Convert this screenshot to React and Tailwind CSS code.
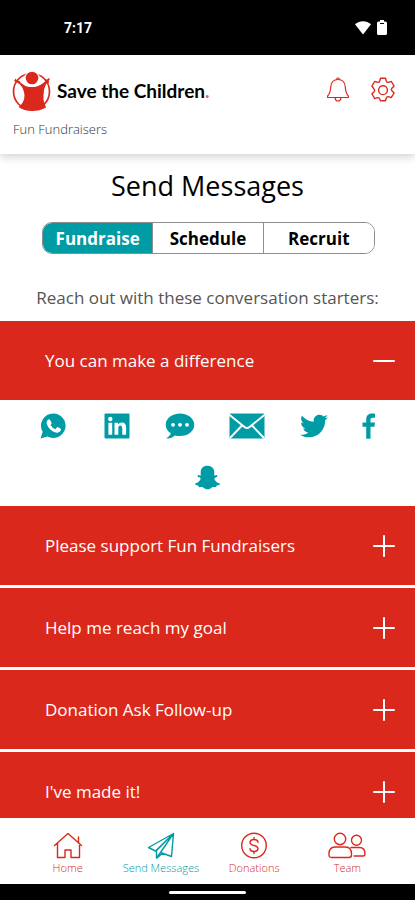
import { useState } from "react";
import { FaSnapchatGhost, FaTwitter } from "react-icons/fa";

function StatusBar() {
  return (
    <div className="flex h-[55px] shrink-0 items-center justify-between bg-black pr-7 pl-16 text-white">
      <span className="font-['Roboto',sans-serif] text-sm font-bold">7:17</span>
      <div className="flex items-center gap-1.5">
        <svg width="16" height="14" viewBox="0 0 16 14" fill="currentColor" aria-hidden="true">
          <path d="M0 3.200C4.600-.8 11.400-.8 16 3.200L8 13.500Z" />
        </svg>
        <svg width="10" height="15" viewBox="0 0 10 15" aria-hidden="true">
          <path
            fill="currentColor"
            d="M3 0h4v1.500h1.500q1.500 0 1.500 1.500v10.500q0 1.500-1.500 1.500h-7Q0 15 0 13.500V3q0-1.500 1.500-1.500H3Z"
          />
          <path d="M3 3.500h4" stroke="#000" strokeWidth="1" />
        </svg>
      </div>
    </div>
  );
}

function Logo() {
  return (
    <svg width="40" height="40" viewBox="0 0 40 40" aria-hidden="true">
      <circle cx="19.500" cy="20.500" r="18" fill="none" stroke="#da291c" strokeWidth="1.700" />
      <path
        fill="#da291c"
        d="M3.500 7.500 5 9.500l2.500.5 1.500 2q4 3.500 8 4h5.500q6-1 11-6l-.2-1.800 1.900.3 1.500-1.500 1.200 1.200-1.200 1.600.4 1.900-2.900 1.100q-2.700 5-2.700 11.200v5l2.500 7.500q-6 3.500-14 3.500T6.500 36q6-4.500 6-11.500-.2-6.500-5-11.500L2 10Z"
      />
      <circle cx="20" cy="7.500" r="7.800" fill="#fff" />
      <circle cx="20" cy="7" r="6.300" fill="#da291c" />
    </svg>
  );
}

function BellIcon() {
  return (
    <svg width="24" height="26" viewBox="0 0 24 26" fill="none" stroke="currentColor" strokeWidth="1.200" strokeLinejoin="round" aria-hidden="true">
      <path d="M12 2.500C8 2.500 5.200 5.200 4.800 9.500c-.4 5.500-1 7.500-3.200 9.500v1.500h20.800V19c-2.200-2-2.800-4-3.200-9.500C18.800 5.200 16 2.500 12 2.500Z" />
      <path d="M10.500 2.500q.1-1.500 1.500-1.500t1.500 1.500M9 20.600q.5 3.400 3 3.400t3-3.400" />
    </svg>
  );
}

function GearIcon() {
  return (
    <svg width="26" height="26" viewBox="0 0 26 26" fill="none" stroke="currentColor" strokeWidth="1.400" strokeLinejoin="round" aria-hidden="true">
      <path d="M10.500 1.200h5l.8 2.800q.5 1.600 2 1.300l2.900-.9 2.900 4.600-2.200 2.200q-1.200 1.300 0 2.600l2.200 2.200-2.900 4.600-2.900-.9q-1.500-.3-2 1.300l-.8 2.800h-5L9.700 22q-.5-1.600-2-1.300l-2.900.9L1.900 17l2.200-2.200q1.200-1.300 0-2.600L1.900 9l2.900-4.600 2.900.9q1.500.3 2-1.300Z" />
      <circle cx="13" cy="13.200" r="4.400" />
    </svg>
  );
}

function Header() {
  return (
    <header className="relative flex h-[99px] shrink-0 items-start justify-between bg-white px-3 pt-4 shadow-[0_3px_8px_rgba(0,0,0,0.18)]">
      <div>
        <div className="flex items-center gap-[5px]">
          <Logo />
          <span className="font-['Lato',sans-serif] text-[19px] font-bold text-black">
            Save the Children<span className="text-[#da6a62]">.</span>
          </span>
        </div>
        <p className="mt-2 pl-px text-[13px] leading-5 font-light text-[#333333]">Fun Fundraisers</p>
      </div>
      <div className="flex items-center gap-5 pt-[6px] pr-[7px] text-[#da291c]">
        <button type="button" aria-label="Notifications"><BellIcon /></button>
        <button type="button" aria-label="Settings"><GearIcon /></button>
      </div>
    </header>
  );
}

const tabs = ["Fundraise", "Schedule", "Recruit"];

function Tabs() {
  const [active, setActive] = useState("Fundraise");
  return (
    <div className="mr-10 ml-[42px] mt-[18px] grid h-8 grid-cols-3 divide-x divide-[#8f8f8f] overflow-hidden rounded-[10px] border border-[#8f8f8f]">
      {tabs.map((tab) => (
        <button
          key={tab}
          type="button"
          aria-pressed={tab === active}
          onClick={() => setActive(tab)}
          className={`pt-0.5 text-[17px] leading-6 font-bold ${tab === active ? "bg-[#009ca6] text-white" : "bg-white text-black"}`}
        >
          {tab}
        </button>
      ))}
    </div>
  );
}

function WhatsAppIcon() {
  return (
    <svg width="30" height="26" viewBox="0 0 30 26" aria-hidden="true">
      <path
        fill="currentColor"
        d="M13.300.5a12.200 12.200 0 0 0-10.600 18.300L.5 25.500l7-2.100A12.200 12.200 0 1 0 13.300.5Z"
      />
      <path
        fill="#fff"
        d="M8 6.700q1-.9 2 0l1.600 3.200q.2.800-1.100 2.100 1.800 3 4.800 4.200l1.600-1.800q.5-.5 1.200-.1l2.700 1.400q.5.400.1 1.600-1.200 2.500-3.900 2.400-4.500-.4-8.300-5-2.700-3.600-1.900-6.100.4-1.200 1.200-1.900Z"
      />
    </svg>
  );
}

function LinkedInIcon() {
  return (
    <svg width="26" height="26" viewBox="0 0 26 26" aria-hidden="true">
      <rect x=".5" y=".5" width="25" height="25" rx="1" fill="currentColor" />
      <g fill="#fff">
        <circle cx="6.300" cy="6" r="2.200" />
        <path d="M4.400 9.800h3.800v12H4.400ZM10.500 9.800h3.600v1.700q1.200-2 3.800-2 4.200 0 4.200 5v7.300h-3.800v-6.500q0-2.700-1.900-2.700-2.100 0-2.100 2.700v6.500h-3.800Z" />
      </g>
    </svg>
  );
}

function ChatIcon() {
  return (
    <svg width="30" height="26" viewBox="0 0 30 26" aria-hidden="true">
      <path
        fill="currentColor"
        d="M15 .5C7 .5.7 5.500.7 11.800c0 3.600 2 6.600 5.100 8.500-.5 2-2 3.700-4.800 5 3.500.4 6.500-.6 8.800-2.900 1.600.5 3.400.7 5.200.7 8 0 14.300-5 14.300-11.300S23 .5 15 .5Z"
      />
      <g fill="#fff">
        <circle cx="8" cy="11.800" r="1.900" />
        <circle cx="15" cy="11.800" r="1.900" />
        <circle cx="22" cy="11.800" r="1.900" />
      </g>
    </svg>
  );
}

function MailIcon() {
  return (
    <svg width="36" height="26" viewBox="0 0 36 26" aria-hidden="true">
      <rect width="35" height="25" x=".5" y=".5" rx="1" fill="currentColor" />
      <path d="M0 1.500 15.500 14q2.500 2 5 0L36 1.500M1 25l12-12.500M35 25 23 12.500" fill="none" stroke="#fff" strokeWidth="1.900" />
    </svg>
  );
}

function FacebookIcon() {
  return (
    <svg width="14" height="26" viewBox="0 0 14 26" fill="currentColor" aria-hidden="true">
      <path d="M13 .7v4.100h-2.500C8.900 4.800 8.500 5.600 8.500 7v2.500H13l-.6 4.200H8.500v12h-4.300v-12H.5V9.500h3.700V6.300C4.200 2.600 6.400.4 9.700.4c1.500 0 2.800.2 3.300.3Z" />
    </svg>
  );
}

const linkClass = "text-[#009ca6]";

function ShareIcons() {
  return (
    <div className="pt-3 pb-[13px]">
      <div className="flex h-7 items-center justify-between pr-[39px] pl-10">
        <a href="#whatsapp" aria-label="WhatsApp" className={linkClass}><WhatsAppIcon /></a>
        <a href="#linkedin" aria-label="LinkedIn" className={linkClass}><LinkedInIcon /></a>
        <a href="#sms" aria-label="Text message" className={linkClass}><ChatIcon /></a>
        <a href="#email" aria-label="Email" className={linkClass}><MailIcon /></a>
        <a href="#twitter" aria-label="Twitter" className={linkClass}><FaTwitter size={28} /></a>
        <a href="#facebook" aria-label="Facebook" className={linkClass}><FacebookIcon /></a>
      </div>
      <div className="mt-6 flex h-[26px] items-center justify-center">
        <a href="#snapchat" aria-label="Snapchat" className={linkClass}><FaSnapchatGhost size={25} /></a>
      </div>
    </div>
  );
}

const starters = [
  "You can make a difference",
  "Please support Fun Fundraisers",
  "Help me reach my goal",
  "Donation Ask Follow-up",
  "I've made it!",
];

function Accordion() {
  const [open, setOpen] = useState(0);
  return (
    <div className="mt-[11px] flex flex-col gap-[3px]">
      {starters.map((title, i) => (
        <section key={title}>
          <button
            type="button"
            aria-expanded={i === open}
            onClick={() => setOpen(i === open ? -1 : i)}
            className="flex h-[79px] w-full items-center justify-between bg-[#da291c] pt-px pr-5 pl-[45px] text-left text-[17px] text-white"
          >
            {title}
            <svg width="22" height="22" viewBox="0 0 22 22" stroke="currentColor" strokeWidth="2" strokeLinecap="round" aria-hidden="true">
              <path d={i === open ? "M1 11h20" : "M1 11h20M11 1v20"} />
            </svg>
          </button>
          {i === open && <ShareIcons />}
        </section>
      ))}
    </div>
  );
}

function HomeIcon() {
  return <path d="M1.500 13.500 15 1.500l13.500 12M25.500 10.500V5M4.500 11.500V25.500H12V18h6v7.500h8.500v-14" />;
}

function PlaneIcon() {
  return (
    <path d="M27.500 1.500 2.500 15.500l7 3.500ZM27.500 1.500 14.500 20.500l11 4ZM27.500 1.500 10.500 18.500v7.500l4-5.500M11 26l5.500-4.700" />
  );
}

function DollarIcon() {
  return (
    <>
      <circle cx="15" cy="13.500" r="12.300" />
      <path d="M19 10.200q-.5-2.700-4-2.700t-4 2.700q0 2.300 4 3.300t4 3.300q-.5 2.700-4 2.700t-4-2.700M15 5.500v2M15 19.500v2" />
    </>
  );
}

function TeamIcon() {
  return (
    <>
      <circle cx="12" cy="7" r="5.700" />
      <path d="M1 22q0-7 6-7h10.500q6 0 6 7v1q0 2.500-2.500 2.500H3.500Q1 25.500 1 23Z" />
      <circle cx="28.500" cy="8.300" r="5" />
      <path d="M23 15.500h8.500q5.500 0 5.500 6.500 0 2-2 2h-9" />
    </>
  );
}

const navItems = [
  { label: "Home", Icon: HomeIcon, width: 30 },
  { label: "Send Messages", Icon: PlaneIcon, width: 30 },
  { label: "Donations", Icon: DollarIcon, width: 30 },
  { label: "Team", Icon: TeamIcon, width: 38 },
];

function BottomNav() {
  return (
    <nav className="grid h-[66px] shrink-0 grid-cols-4 bg-white px-[21px] pt-[14px]">
      {navItems.map(({ label, Icon, width }) => (
        <a
          key={label}
          href="#nav"
          aria-current={label === "Send Messages" ? "page" : undefined}
          className={`flex flex-col items-center text-[11px] leading-[18px] font-light whitespace-nowrap ${label === "Send Messages" ? "text-[#009ca6]" : "text-[#da291c]"}`}
        >
          <svg width={width} height="27" viewBox={`0 0 ${width} 27`} fill="none" stroke="currentColor" strokeWidth="1.400" strokeLinejoin="round" strokeLinecap="round" aria-hidden="true">
            <Icon />
          </svg>
          {label}
        </a>
      ))}
    </nav>
  );
}

export default function App() {
  return (
    <div className="flex h-screen flex-col overflow-hidden bg-white font-['Open_Sans','Noto_Sans',sans-serif]">
      <StatusBar />
      <Header />
      <main className="min-h-0 flex-1 overflow-hidden">
        <h1 className="pt-[14px] text-center text-[27px] leading-9 text-black">Send Messages</h1>
        <Tabs />
        <p className="mt-8 text-center text-[17px] leading-6 text-[#555555]">
          Reach out with these conversation starters:
        </p>
        <Accordion />
      </main>
      <BottomNav />
      <div className="flex h-4 shrink-0 items-center justify-center bg-black">
        <div className="h-[3px] w-[77px] rounded-full bg-white" />
      </div>
    </div>
  );
}
